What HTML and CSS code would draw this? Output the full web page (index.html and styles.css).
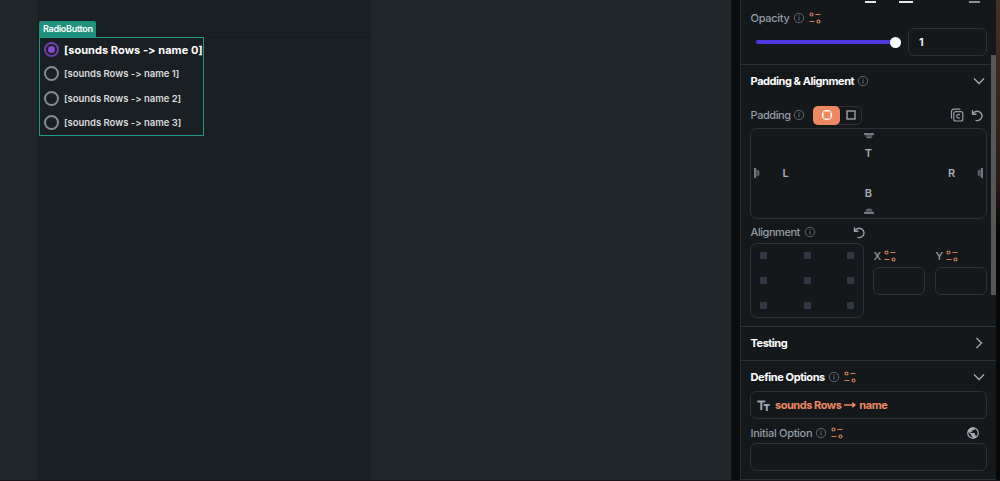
FILE: index.html
```
<!DOCTYPE html>
<html lang="en">
<head>
  <meta charset="UTF-8" />
  <meta name="viewport" content="width=device-width, initial-scale=1" />
  <title>RadioButton properties</title>
  <link rel="stylesheet" href="styles.css">
</head>
<body>
  <!-- Shared icons -->
  <svg class="icon-defs" width="0" height="0">
    <symbol id="info" viewBox="0 0 12 12">
      <circle cx="6" cy="6" r="4.7" fill="none" stroke="currentColor"/>
      <path d="M6 5.3v3.2M6 3.3v1.1" stroke="currentColor" stroke-width="1.1"/>
    </symbol>
    <symbol id="bind" viewBox="0 0 12 12">
      <g fill="none" stroke="currentColor" stroke-width="1.2">
        <circle cx="2.5" cy="2.5" r="1.5"/>
        <path d="M6.5 2.5h5M.5 9.5h5"/>
        <circle cx="9.5" cy="9.5" r="1.5"/>
      </g>
    </symbol>
    <symbol id="chevron" viewBox="0 0 12 12">
      <path d="M1 3.5l5 5 5-5" fill="none" stroke="currentColor" stroke-width="1.4"/>
    </symbol>
    <symbol id="undo" viewBox="0 0 12 12">
      <path d="M1.5 .8v4h4M1.8 4.5C3.3 2.1 6 1.2 8.5 2.3c2.7 1.4 3.3 5 1.3 7.1C8.5 11 6.5 11.5 4.5 10.8" fill="none" stroke="currentColor" stroke-width="1.4"/>
    </symbol>
    <symbol id="edge" viewBox="0 0 12 6">
      <path d="M1 1h10" stroke="currentColor" stroke-width="1.3"/>
      <path d="M2.5 3h7M3.5 4.7h5" stroke="currentColor" stroke-width="1" opacity=".75"/>
    </symbol>
  </svg>

  <div class="editor">
    <!-- Canvas -->
    <div class="canvas">
      <div class="screen">
        <div class="app-bar"></div>
        <div class="widget">
          <span class="widget-tag">RadioButton</span>
          <ul class="radio-list">
            <li class="radio selected"><span class="dot"></span><span class="radio-text">[sounds Rows -&gt; name 0]</span></li>
            <li class="radio"><span class="dot"></span><span class="radio-text">[sounds Rows -&gt; name 1]</span></li>
            <li class="radio"><span class="dot"></span><span class="radio-text">[sounds Rows -&gt; name 2]</span></li>
            <li class="radio"><span class="dot"></span><span class="radio-text">[sounds Rows -&gt; name 3]</span></li>
          </ul>
        </div>
      </div>
    </div>

    <!-- Properties panel -->
    <div class="panel">
      <section class="section opacity">
        <div class="clipped-icons"><i></i><i></i><i></i></div>
        <div class="row">
          <span class="label w-opacity">Opacity</span>
          <svg class="info"><use href="#info"/></svg>
          <svg class="bind"><use href="#bind"/></svg>
        </div>
        <div class="slider-row">
          <div class="slider"><span class="knob"></span></div>
          <div class="field value">1</div>
        </div>
      </section>

      <section class="section layout">
        <div class="row heading">
          <span class="title w-padalign">Padding &amp; Alignment</span>
          <svg class="info"><use href="#info"/></svg>
          <svg class="chevron end"><use href="#chevron"/></svg>
        </div>
        <div class="row padding-head">
          <span class="label w-padding">Padding</span>
          <svg class="info"><use href="#info"/></svg>
          <div class="toggle">
            <span class="on"><svg width="12" height="12" viewBox="0 0 12 12" fill="none" stroke="currentColor"><rect x="2" y="2" width="8" height="8" rx="1.5" stroke-width="1"/><path d="M4 1.5h4M4 10.5h4M1.5 4v4M10.5 4v4" stroke-width="1.2"/></svg></span>
            <span><svg width="12" height="12" viewBox="0 0 12 12" fill="none" stroke="currentColor"><rect x="2" y="2" width="8" height="8" stroke-width="1.3"/></svg></span>
          </div>
          <svg class="copy end" viewBox="0 0 14 14" fill="none" stroke="currentColor" stroke-width="1.2">
            <rect x="3.8" y="3.6" width="9" height="9.4" rx="2"/>
            <path d="M1.5 10.5V3.5a2.3 2.3 0 0 1 2.3-2.3h6.5M10 7a1.9 1.9 0 1 0 0 2.6"/>
          </svg>
          <svg class="undo"><use href="#undo"/></svg>
        </div>
        <div class="padding-box">
          <svg class="edge top"><use href="#edge"/></svg>
          <span class="t">T</span>
          <svg class="edge left"><use href="#edge"/></svg>
          <span class="l">L</span>
          <span class="r">R</span>
          <svg class="edge right"><use href="#edge"/></svg>
          <span class="b">B</span>
          <svg class="edge bottom"><use href="#edge"/></svg>
        </div>
        <div class="align-area">
          <div class="align-col">
            <div class="row">
              <span class="label w-alignment">Alignment</span>
              <svg class="info"><use href="#info"/></svg>
              <svg class="undo end"><use href="#undo"/></svg>
            </div>
            <div class="align-grid"><i></i><i></i><i></i><i></i><i></i><i></i><i></i><i></i><i></i></div>
          </div>
          <div class="axis">
            <div class="row"><span class="label">X</span><svg class="bind"><use href="#bind"/></svg></div>
            <div class="field"></div>
          </div>
          <div class="axis">
            <div class="row"><span class="label">Y</span><svg class="bind"><use href="#bind"/></svg></div>
            <div class="field"></div>
          </div>
        </div>
      </section>

      <section class="section testing">
        <div class="row heading">
          <span class="title w-testing">Testing</span>
          <svg class="chevron closed end"><use href="#chevron"/></svg>
        </div>
      </section>

      <section class="section options">
        <div class="row heading">
          <span class="title w-define">Define Options</span>
          <svg class="info"><use href="#info"/></svg>
          <svg class="bind"><use href="#bind"/></svg>
          <svg class="chevron end"><use href="#chevron"/></svg>
        </div>
        <div class="field source">
          <svg width="13" height="11" viewBox="0 0 13 11" fill="none" stroke="#9ba3b4" stroke-width="2"><path d="M.3 1.5h8M4.3 1.5V10M6.7 5h6M9.8 5v6"/></svg>
          <span class="source-text">sounds Rows</span>
          <svg class="arrow" width="12" height="8" viewBox="0 0 12 8" fill="none" stroke="currentColor" stroke-width="1.6"><path d="M0 4h10.5M8.3 1.8L10.8 4 8.3 6.2"/></svg>
          <span class="source-text">name</span>
        </div>
        <div class="row initial">
          <span class="label w-initial">Initial Option</span>
          <svg class="info"><use href="#info"/></svg>
          <svg class="bind"><use href="#bind"/></svg>
          <svg class="globe end" viewBox="0 0 24 24"><path fill="currentColor" d="M12 2C6.48 2 2 6.48 2 12s4.48 10 10 10 10-4.48 10-10S17.52 2 12 2zm-1 17.93c-3.95-.49-7-3.85-7-7.93 0-.62.08-1.21.21-1.79L9 15v1c0 1.1.9 2 2 2v1.93zm6.9-2.54c-.26-.81-1-1.39-1.9-1.39h-1v-3c0-.55-.45-1-1-1H8v-2h2c.55 0 1-.45 1-1V7h2c1.1 0 2-.9 2-2v-.41c2.93 1.19 5 4.06 5 7.41 0 2.08-.8 3.97-2.1 5.39z"/></svg>
        </div>
        <div class="field"></div>
      </section>
    </div>

    <div class="scroll"><div class="thumb"></div></div>
    <div class="screen-edge"></div>
  </div>
</body>
</html>
```
FILE: styles.css
```
* {
  box-sizing: border-box;
}

body {
  margin: 0;
  background: #0b0d0f;
  font-family: Inter, "Liberation Sans", sans-serif;
  font-size: 11px;
  color: #fff;
  overflow: hidden;
}

svg {
  display: block;
  flex: none;
}

.icon-defs {
  position: absolute;
}

.editor {
  display: flex;
  height: 481px;
  border-bottom: 1px solid #191719;
}

/* Canvas */
.canvas {
  width: 731px;
  padding-left: 37px;
  background: #20262a;
  border-right: 1px solid #262c30;
}

.screen {
  width: 334px;
  height: 480px;
  background: #1a1f23;
}

.app-bar {
  height: 38px;
  border-bottom: 1px solid #14191c;
}

.widget {
  position: relative;
  width: 165px;
  margin: -1px 0 0 2px;
}

.widget-tag {
  position: absolute;
  left: 0;
  top: -16px;
  width: 57px;
  height: 16px;
  padding-left: 4px;
  border-radius: 2px 2px 0 0;
  background: #20907f;
  font-size: 9px;
  font-weight: 600;
  line-height: 16px;
  letter-spacing: -0.28px;
}

.radio-list {
  height: 99px;
  margin: 0;
  padding: 0 0 0 4px;
  border: 1px solid #1f9c89;
  list-style: none;
}

.radio {
  display: flex;
  align-items: center;
  gap: 5px;
  height: 24.6px;
  color: #d9dcdf;
  font-size: 9.5px;
  font-weight: 600;
  white-space: nowrap;
}

.radio-text {
  letter-spacing: -0.02px;
}

.dot {
  flex: none;
  width: 15px;
  height: 15px;
  border: 2px solid #858c98;
  border-radius: 50%;
}

.selected {
  height: 23.4px;
  color: #fff;
  font-size: 11px;
  font-weight: 700;
}

.selected .radio-text {
  letter-spacing: 0.05px;
}

.selected .dot {
  padding: 2px;
  border-color: #713db0;
  background: #824bc8 content-box;
}

/* Properties panel */
.panel {
  width: 256px;
  margin-left: 9px;
  border-left: 1px solid #272d32;
  background: #14181b;
}

.section {
  padding: 0 9px;
  border-bottom: 1px solid #2b3137;
}

.opacity {
  height: 65px;
}

.layout {
  height: 262px;
}

.testing {
  height: 34px;
}

.options {
  height: 119px;
}

.row {
  display: flex;
  align-items: center;
  gap: 4px;
  height: 14px;
}

.heading {
  height: 32px;
}

.label {
  color: #939ba5;
  font-weight: 500;
  text-indent: 0.6px;
  white-space: nowrap;
}

.title {
  font-weight: 700;
  text-indent: 0.6px;
  white-space: nowrap;
}

.end {
  margin-left: auto;
}

.info {
  width: 12px;
  height: 12px;
  color: #5f6871;
}

.bind {
  width: 12px;
  height: 12px;
  color: #d67f57;
}

.chevron {
  width: 12px;
  height: 12px;
  margin-right: 2px;
  color: #a0a8b0;
}

.closed {
  transform: rotate(-90deg);
}

.undo {
  width: 12px;
  height: 13px;
  color: #969fa8;
}

/* Text widths */
.w-opacity { width: 39px; letter-spacing: -0.3px; }
.w-padalign { width: 103px; letter-spacing: -0.45px; }
.w-padding { width: 39px; letter-spacing: -0.45px; }
.w-alignment { width: 50px; letter-spacing: -0.45px; }
.w-testing { letter-spacing: -0.5px; }
.w-define { width: 74px; letter-spacing: -0.42px; }
.w-initial { width: 61px; letter-spacing: -0.3px; }

/* Opacity */
.clipped-icons {
  display: flex;
  height: 11px;
  padding-left: 115px;
}

.clipped-icons i {
  width: 11px;
  height: 3px;
  margin-right: 23px;
  border-bottom: 2px solid #e3e5e7;
}

.clipped-icons i:nth-child(2) {
  width: 14px;
  margin-right: 56px;
}

.clipped-icons i:last-child {
  margin-right: 0;
  border-color: #8b9096;
}

.slider-row {
  display: flex;
  align-items: center;
  justify-content: space-between;
  margin-top: 3px;
  padding-left: 6px;
}

.slider {
  display: flex;
  align-items: center;
  justify-content: flex-end;
  width: 145px;
  height: 4px;
  border-radius: 2px;
  background: #5038e0;
}

.knob {
  width: 11px;
  height: 11px;
  border-radius: 50%;
  background: #fff;
}

.field {
  height: 28px;
  border: 1px solid #2b3138;
  border-radius: 6px;
}

.value {
  width: 79px;
  padding-left: 10px;
  font-weight: 600;
  line-height: 26px;
}

/* Padding & alignment */
.padding-head {
  height: 20px;
  margin-top: 8px;
}

.toggle {
  display: flex;
  width: 49px;
  height: 19px;
  margin-left: 4px;
  border: 1px solid #2b3138;
  border-radius: 5px;
  color: #a5adb5;
}

.toggle span {
  display: flex;
  flex: 1;
  align-items: center;
  justify-content: center;
}

.toggle .on {
  flex: none;
  width: 27px;
  height: 19px;
  margin: -1px 0 0 -1px;
  border-radius: 5px;
  background: #ed8860;
  color: #fff;
}

.copy {
  width: 14px;
  height: 14px;
  margin-right: 3px;
  color: #969fa8;
}

.padding-head .undo {
  margin-right: 4px;
}

.padding-box {
  display: grid;
  grid-template-columns: 12px 45px 1fr 45px 12px;
  grid-template-rows: 13px 22px 18px 22px 14px;
  align-items: center;
  justify-items: center;
  height: 91px;
  margin-top: 3px;
  border: 1px solid #2b3138;
  border-radius: 7px;
  color: #a5adb8;
  font-weight: 600;
}

.edge { width: 12px; height: 6px; }
.top { grid-area: 1 / 3; }
.t { grid-area: 2 / 3; }
.left { grid-area: 3 / 1; transform: rotate(-90deg); }
.l { grid-area: 3 / 2; }
.r { grid-area: 3 / 4; }
.right { grid-area: 3 / 5; transform: rotate(90deg); }
.b { grid-area: 4 / 3; }
.bottom { grid-area: 5 / 3; transform: rotate(180deg); }

.align-area {
  display: flex;
  gap: 10px;
  margin-top: 6px;
}

.align-col {
  width: 114px;
  margin-right: -1px;
}

.align-col .undo {
  margin-right: -1px;
}

.align-grid {
  display: grid;
  grid-template-columns: repeat(3, 7px);
  align-content: space-between;
  justify-content: space-between;
  height: 75px;
  margin-top: 4px;
  padding: 8px 9px;
  border: 1px solid #2b3138;
  border-radius: 7px;
}

.align-grid i {
  width: 7px;
  height: 7px;
  border-radius: 1px;
  background: #303844;
}

.axis {
  width: 52px;
  padding-top: 24px;
}

.axis .field {
  margin-top: 4px;
}

.axis .row {
  gap: 3px;
}

/* Define options */
.source {
  display: flex;
  align-items: center;
  margin-top: -2px;
  padding-left: 6px;
  color: #ed8860;
  font-weight: 700;
}

.source-text {
  margin-left: 5px;
  letter-spacing: -0.47px;
}

.arrow {
  margin-left: 3px;
}

.arrow + .source-text {
  margin-left: 3px;
}

.initial {
  margin: 7px 0 3px;
}

.globe {
  width: 14px;
  height: 14px;
  margin-right: 7px;
  color: #a5adb5;
}

/* Right edge */
.scroll {
  width: 5px;
  margin-left: -5px;
  padding-top: 55px;
}

.thumb {
  height: 240px;
  background: #555759;
}

.screen-edge {
  width: 4px;
  background: linear-gradient(#4a3024, #2b1b16 180px, #090807 230px);
}
```
